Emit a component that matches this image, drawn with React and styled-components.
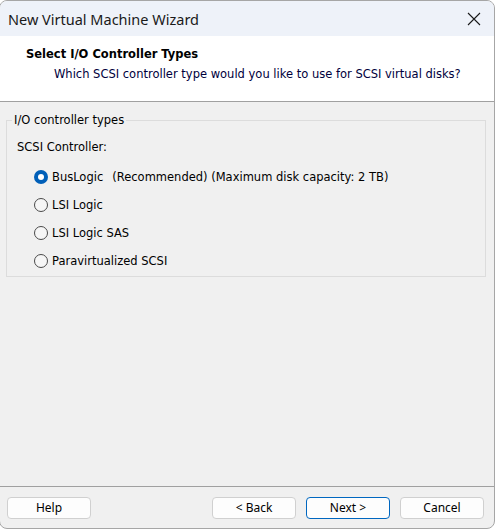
import React from "react";
import styled, { createGlobalStyle } from "styled-components";

const Global = createGlobalStyle`
  html, body { margin: 0; padding: 0; background: #ffffff; }
  body { font-family: "DejaVu Sans", Tahoma, sans-serif; }
`;

const Window = styled.div`
  box-sizing: border-box;
  width: 496px;
  height: 529px;
  margin-left: -1px;
  border: 1px solid #a6a6a6;
  border-radius: 8px;
  overflow: hidden;
  display: flex;
  flex-direction: column;
  background: #f0f0f0;
`;

const TitleBar = styled.div`
  height: 35px;
  background: #eef2f9;
  display: flex;
  align-items: center;
  justify-content: space-between;
  padding: 0 12px 0 8px;
  font-family: "Noto Sans", "Open Sans", sans-serif;
  font-size: 14.5px;
  color: #1a1a1a;
`;

const CloseBtn = styled.div`
  width: 16px;
  height: 16px;
  display: flex;
  align-items: center;
  justify-content: center;
`;

const Header = styled.div`
  height: 66px;
  background: #ffffff;
  border-bottom: 1px solid #a0a0a0;
  padding: 11px 0 0 26px;
  box-sizing: border-box;
  font-family: "DejaVu Sans", Tahoma, sans-serif;
  font-size: 11.5px;
  color: #000;
`;

const HeaderTitle = styled.div`
  font-weight: bold;
  line-height: 14px;
`;

const HeaderSub = styled.div`
  margin-top: 6px;
  padding-left: 28px;
  line-height: 14px;
  color: #00003c;
`;

const Body = styled.div`
  flex: 1;
  padding: 11px 8px 0 6px;
  border-bottom: 1px solid #a0a0a0;
`;

const Group = styled.fieldset`
  margin: 0;
  padding: 4px 10px 4px 10px;
  border: 1px solid #dcdcdc;
  border-radius: 0;
  height: 164px;
  box-sizing: border-box;
  font-size: 11.5px;
  color: #000;
`;

const Legend = styled.legend`
  padding: 0 2px;
  margin-left: -5px;
  font-size: 11.5px;
  line-height: 14px;
`;

const Label = styled.div`
  margin-top: 9px;
  line-height: 14px;
`;

const Options = styled.div`
  display: flex;
  flex-direction: column;
  gap: 14px;
  margin-top: 16px;
  padding-left: 17px;
`;

const Option = styled.label`
  display: flex;
  align-items: center;
  height: 14px;
  line-height: 14px;
`;

const Radio = styled.span`
  box-sizing: border-box;
  width: 14px;
  height: 14px;
  border-radius: 50%;
  margin-right: 4px;
  flex: none;
  border: ${(p) => (p.$checked ? "none" : "1px solid #4a4a4a")};
  background: ${(p) => (p.$checked ? "#005fb8" : "#f6f6f6")};
  display: flex;
  align-items: center;
  justify-content: center;
  &::after {
    content: "";
    display: ${(p) => (p.$checked ? "block" : "none")};
    width: 6px;
    height: 6px;
    border-radius: 50%;
    background: #fff;
  }
`;

const Note = styled.span`
  margin-left: 9px;
`;

const Footer = styled.div`
  height: 41px;
  display: flex;
  align-items: center;
  padding: 0 10px 0 7px;
  box-sizing: border-box;
`;

const Button = styled.button`
  box-sizing: border-box;
  width: 84px;
  height: 22px;
  margin-left: ${(p) => p.$gap || 0}px;
  border: 1px solid ${(p) => (p.$primary ? "#0067c0" : "#d0d0d0")};
  border-radius: 4px;
  background: #fdfdfd;
  font-family: "Noto Sans", "Open Sans", sans-serif;
  font-size: 12px;
  color: #000;
  padding: 0;
  line-height: 18px;
`;

const Spacer = styled.div`
  flex: 1;
`;

export default function App() {
  const options = [
    { label: "BusLogic", checked: true, note: "(Recommended) (Maximum disk capacity: 2 TB)" },
    { label: "LSI Logic" },
    { label: "LSI Logic SAS" },
    { label: "Paravirtualized SCSI" },
  ];
  return (
    <>
      <Global />
      <Window>
        <TitleBar>
          <span>New Virtual Machine Wizard</span>
          <CloseBtn>
            <svg width="14" height="14" viewBox="0 0 14 14">
              <path d="M1 1L13 13M13 1L1 13" stroke="#1a1a1a" strokeWidth="1.1" />
            </svg>
          </CloseBtn>
        </TitleBar>
        <Header>
          <HeaderTitle>Select I/O Controller Types</HeaderTitle>
          <HeaderSub>Which SCSI controller type would you like to use for SCSI virtual disks?</HeaderSub>
        </Header>
        <Body>
          <Group>
            <Legend>I/O controller types</Legend>
            <Label>SCSI Controller:</Label>
            <Options>
              {options.map((o) => (
                <Option key={o.label}>
                  <Radio $checked={o.checked} />
                  {o.label}
                  {o.note && <Note>{o.note}</Note>}
                </Option>
              ))}
            </Options>
          </Group>
        </Body>
        <Footer>
          <Button>Help</Button>
          <Spacer />
          <Button>&lt; Back</Button>
          <Button $gap={10} $primary>Next &gt;</Button>
          <Button $gap={10}>Cancel</Button>
        </Footer>
      </Window>
    </>
  );
}
